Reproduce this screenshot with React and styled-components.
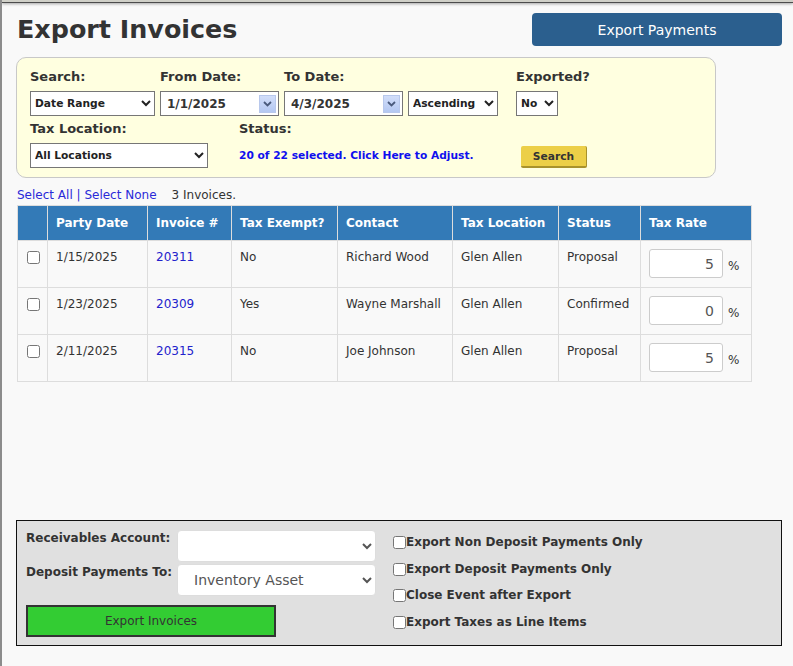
import React from "react";
import styled, { createGlobalStyle } from "styled-components";

const GlobalStyle = createGlobalStyle`
    html, body {
        margin: 0;
        padding: 0;
        background: #f9f9f9;
    }
    body {
        min-height: 100vh;
        border-left: 2px solid #8c8c8c;
        box-sizing: border-box;
        font-family: "DejaVu Sans", Verdana, sans-serif;
        color: #333;
    }
`;

const invoices = [
    { date: "1/15/2025", num: "20311", exempt: "No", contact: "Richard Wood", location: "Glen Allen", status: "Proposal", rate: "5" },
    { date: "1/23/2025", num: "20309", exempt: "Yes", contact: "Wayne Marshall", location: "Glen Allen", status: "Confirmed", rate: "0" },
    { date: "2/11/2025", num: "20315", exempt: "No", contact: "Joe Johnson", location: "Glen Allen", status: "Proposal", rate: "5" },
];

const columns = [
    { title: "", width: 30 },
    { title: "Party Date", width: 100 },
    { title: "Invoice #", width: 84 },
    { title: "Tax Exempt?", width: 106 },
    { title: "Contact", width: 115 },
    { title: "Tax Location", width: 106 },
    { title: "Status", width: 82 },
    { title: "Tax Rate", width: 111 },
];

const Chevron = () => (
    <svg width="9" height="6" viewBox="0 0 9 6">
        <path d="M1 1l3.5 3.5L8 1" fill="none" stroke="#4a5a7c" strokeWidth="1.8" />
    </svg>
);

// 날짜 입력칸
const DateField = ({ value }) => (
    <DateBox>
        <span>{value}</span>
        <PickerButton><Chevron /></PickerButton>
    </DateBox>
);

const App = () => {
    return (
        <>
            <GlobalStyle />
            <TopEdge />
            <Page>
                <Header>
                    <Title>Export Invoices</Title>
                    <BlueButton>Export Payments</BlueButton>
                </Header>

                <FilterPanel>
                    <FilterRow>
                        <Field>
                            <Label>Search:</Label>
                            <Select $w={125} defaultValue="range">
                                <option value="range">Date Range</option>
                            </Select>
                        </Field>
                        <Field>
                            <Label>From Date:</Label>
                            <DateField value="1/1/2025" />
                        </Field>
                        <Field>
                            <Label>To Date:</Label>
                            <Inline>
                                <DateField value="4/3/2025" />
                                <Select $w={90} defaultValue="asc">
                                    <option value="asc">Ascending</option>
                                </Select>
                            </Inline>
                        </Field>
                        <Field $ml={18}>
                            <Label>Exported?</Label>
                            <Select $w={42} defaultValue="no">
                                <option value="no">No</option>
                            </Select>
                        </Field>
                    </FilterRow>
                    <FilterRow>
                        <Field $w={178}>
                            <Label>Tax Location:</Label>
                            <Select $w={178} defaultValue="all">
                                <option value="all">All Locations</option>
                            </Select>
                        </Field>
                        <Field $ml={31} $w={277}>
                            <Label>Status:</Label>
                            <StatusLink>20 of 22 selected. Click Here to Adjust.</StatusLink>
                        </Field>
                        <SearchButton>Search</SearchButton>
                    </FilterRow>
                </FilterPanel>

                <ListArea>
                    <SelectLinks>
                        <a>Select All</a> | <a>Select None</a>
                        <Count>3 Invoices.</Count>
                    </SelectLinks>
                    <Table>
                        <colgroup>
                            {columns.map((c, i) => <col key={i} style={{ width: c.width }} />)}
                        </colgroup>
                        <thead>
                            <tr>
                                {columns.map((c, i) => <Th key={i}>{c.title}</Th>)}
                            </tr>
                        </thead>
                        <tbody>
                            {invoices.map((inv) => (
                                <tr key={inv.num}>
                                    <Td $check><Check type="checkbox" /></Td>
                                    <Td>{inv.date}</Td>
                                    <Td><InvoiceLink>{inv.num}</InvoiceLink></Td>
                                    <Td>{inv.exempt}</Td>
                                    <Td>{inv.contact}</Td>
                                    <Td>{inv.location}</Td>
                                    <Td>{inv.status}</Td>
                                    <Td>
                                        <RateBox>
                                            <RateInput defaultValue={inv.rate} />
                                            <span>%</span>
                                        </RateBox>
                                    </Td>
                                </tr>
                            ))}
                        </tbody>
                    </Table>
                </ListArea>

                <ExportPanel>
                    <AccountColumn>
                        <AccountRow>
                            <AccountLabel>Receivables Account:</AccountLabel>
                            <AccountSelect defaultValue="">
                                <option value=""></option>
                            </AccountSelect>
                        </AccountRow>
                        <AccountRow>
                            <AccountLabel>Deposit Payments To:</AccountLabel>
                            <AccountSelect defaultValue="inv">
                                <option value="inv">Inventory Asset</option>
                            </AccountSelect>
                        </AccountRow>
                        <GreenButton>Export Invoices</GreenButton>
                    </AccountColumn>
                    <OptionList>
                        <Option><Check type="checkbox" />Export Non Deposit Payments Only</Option>
                        <Option><Check type="checkbox" />Export Deposit Payments Only</Option>
                        <Option><Check type="checkbox" />Close Event after Export</Option>
                        <Option><Check type="checkbox" />Export Taxes as Line Items</Option>
                    </OptionList>
                </ExportPanel>
            </Page>
        </>
    );
};

export default App;

const TopEdge = styled.div`
    height: 2px;
    background: #d0d0c8;
    border-bottom: 1px solid #4c4c4c;
    box-shadow: 0 1px 3px rgba(0, 0, 0, 0.35);
`;

const Page = styled.div`
    padding: 10px 11px 0 14px;
`;

const Header = styled.div`
    display: flex;
    justify-content: space-between;
    align-items: center;
    height: 33px;
`;

const Title = styled.h1`
    margin: 0 0 0 1px;
    font-size: 25.4px;
    font-weight: bold;
    color: #333;
    line-height: 35px;
`;

const BlueButton = styled.button`
    width: 250px;
    height: 33px;
    background: #2b5f8e;
    color: #fff;
    border: none;
    border-radius: 4px;
    font-family: "DejaVu Sans", Verdana, sans-serif;
    font-size: 14px;
`;

const FilterPanel = styled.div`
    width: 700px;
    box-sizing: border-box;
    margin-top: 11px;
    padding: 10px 13px 9px;
    background: #ffffe0;
    border: 1px solid #c8c8c8;
    border-radius: 10px;
    display: flex;
    flex-direction: column;
    gap: 4px;
`;

const FilterRow = styled.div`
    display: flex;
    align-items: flex-end;
    gap: 5px;
`;

const Field = styled.div`
    display: flex;
    flex-direction: column;
    gap: 6px;
    margin-left: ${(p) => (p.$ml ? p.$ml - 5 : 0)}px;
    width: ${(p) => (p.$w ? `${p.$w}px` : "auto")};
`;

const Inline = styled.div`
    display: flex;
    gap: 5px;
`;

const Label = styled.div`
    font-size: 13px;
    font-weight: bold;
    line-height: 17px;
    color: #333;
`;

const Select = styled.select`
    width: ${(p) => p.$w}px;
    height: 25px;
    font-family: "DejaVu Sans", Verdana, sans-serif;
    font-size: 8pt;
    font-weight: bold;
    color: #222;
    background: #fff;
`;

const DateBox = styled.div`
    width: 119px;
    height: 25px;
    box-sizing: border-box;
    border: 1px solid #767676;
    background: #fff;
    display: flex;
    align-items: center;
    justify-content: space-between;
    padding: 0 2px 0 6px;
    font-size: 12px;
    font-weight: bold;
    color: #333;
`;

const PickerButton = styled.span`
    width: 17px;
    height: 18px;
    display: flex;
    align-items: center;
    justify-content: center;
    background: linear-gradient(#d2defa, #b4c8f2);
    border: 1px solid #b8c8ec;
    box-sizing: border-box;
`;

const StatusLink = styled.a`
    height: 25px;
    display: flex;
    align-items: center;
    font-size: 8pt;
    font-weight: bold;
    color: #1010ee;
    cursor: pointer;
`;

const SearchButton = styled.button`
    height: 22px;
    width: 66px;
    padding: 0;
    background: #eccf48;
    border: none;
    border-right: 1px solid #a8922c;
    border-bottom: 2px solid #a8922c;
    border-radius: 2px;
    font-family: "DejaVu Sans", Verdana, sans-serif;
    font-size: 8pt;
    font-weight: bold;
    color: #333;
`;

const ListArea = styled.div`
    height: 332px;
    margin-top: 10px;
    padding-left: 1px;
`;

const SelectLinks = styled.div`
    font-size: 12px;
    line-height: 14px;
    color: #2a2ad8;
    margin-bottom: 3px;
    a {
        cursor: pointer;
    }
`;

const Count = styled.span`
    color: #333;
    margin-left: 15px;
`;

const Table = styled.table`
    border-collapse: collapse;
    table-layout: fixed;
    width: 734px;
    font-size: 12px;
    border: 1px solid #ddd;
`;

const Th = styled.th`
    background: #337ab7;
    color: #fff;
    text-align: left;
    font-weight: bold;
    padding: 8px 8px;
    line-height: 18px;
    border: 1px solid #ddd;
    border-top: none;
`;

const Td = styled.td`
    vertical-align: top;
    padding: ${(p) => (p.$check ? "10px 8px 9px 8px" : "8px 8px 9px")};
    line-height: 17px;
    border: 1px solid #ddd;
    color: #333;
`;

const InvoiceLink = styled.a`
    color: #2222cc;
    cursor: pointer;
`;

const Check = styled.input`
    width: 13px;
    height: 13px;
    margin: 0 0 0 1px;
    vertical-align: top;
`;

const RateBox = styled.div`
    display: flex;
    align-items: center;
    gap: 5px;
    font-size: 12px;
    height: 29px;
    span {
        margin-top: 6px;
    }
`;

const RateInput = styled.input`
    width: 74px;
    height: 29px;
    box-sizing: border-box;
    border: 1px solid #ccc;
    border-radius: 3px;
    text-align: right;
    padding: 0 8px;
    font-family: "DejaVu Sans", Verdana, sans-serif;
    font-size: 14px;
    color: #555;
`;

const ExportPanel = styled.div`
    width: 766px;
    box-sizing: border-box;
    background: #e0e0e0;
    border: 1px solid #111;
    padding: 9px 8px 8px 9px;
    display: flex;
    gap: 17px;
`;

const AccountColumn = styled.div`
    display: flex;
    flex-direction: column;
    gap: 2px;
`;

const AccountRow = styled.div`
    display: flex;
    align-items: flex-start;
`;

const AccountLabel = styled.div`
    width: 151px;
    font-size: 12px;
    font-weight: bold;
    line-height: 14px;
    padding-top: 1px;
    color: #333;
`;

const AccountSelect = styled.select`
    width: 199px;
    height: 32px;
    background: #fff;
    border: 1px solid #ddd;
    border-radius: 4px;
    padding: 0 12px;
    font-family: "DejaVu Sans", Verdana, sans-serif;
    font-size: 14px;
    color: #555;
`;

const GreenButton = styled.button`
    width: 250px;
    height: 32px;
    margin-top: 7px;
    background: #33cc33;
    border: 2px solid #333;
    font-family: "DejaVu Sans", Verdana, sans-serif;
    font-size: 12px;
    color: #333;
`;

const OptionList = styled.div`
    display: flex;
    flex-direction: column;
    gap: 11.6px;
    padding-top: 5px;
`;

const Option = styled.label`
    display: flex;
    align-items: center;
    font-size: 12px;
    font-weight: bold;
    line-height: 15px;
    color: #333;
    input {
        margin: 0;
    }
`;
